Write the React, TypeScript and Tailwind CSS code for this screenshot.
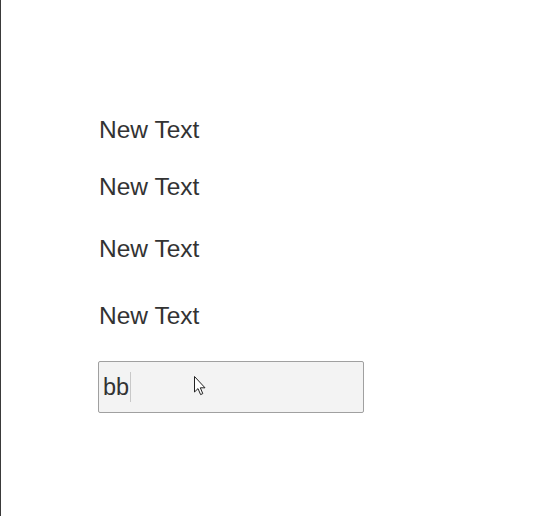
import React from 'react';

const lines = [
    { text: 'New Text', className: 'mt-0' },
    { text: 'New Text', className: 'mt-[29px]' },
    { text: 'New Text', className: 'mt-[34px]' },
    { text: 'New Text', className: 'mt-[39px]' },
];

// Mouse pointer drawn over the input
const Pointer: React.FC = () => (
    <svg width="13" height="20" viewBox="0 0 13 20" className="absolute left-[95px] top-[14px]">
        <path
            d="M0.5 0.5 L0.5 16 L4 12.6 L6.6 18.6 L8.8 17.6 L6.3 11.8 L11 11.8 Z"
            fill="#ffffff"
            stroke="#222222"
            strokeWidth="1"
            strokeLinejoin="round"
        />
    </svg>
);

const App: React.FC = () => {
    return (
        <div className="h-[516px] w-[559px] overflow-hidden bg-white border-l border-[#3a3a3a] font-['Liberation_Sans',Arial,sans-serif] text-[#333333]">
            <div className="flex flex-col items-start pl-[97px] pt-[116px]">
                {lines.map((line, i) => (
                    <div key={i} className={`${line.className} pl-px text-[24.5px] leading-[28px]`}>
                        {line.text}
                    </div>
                ))}

                {/* Input field */}
                <div className="relative mt-[31px] flex h-[52px] w-[266px] items-center rounded-[2px] border border-[#a0a0a0] bg-[#f3f3f3] pl-[4px]">
                    <span className="text-[23.5px] leading-[28px] text-[#333333]">bb</span>
                    <span className="ml-px h-[30px] w-px bg-[#c8c8c8]" />
                    <Pointer />
                </div>
            </div>
        </div>
    );
};

export default App;
